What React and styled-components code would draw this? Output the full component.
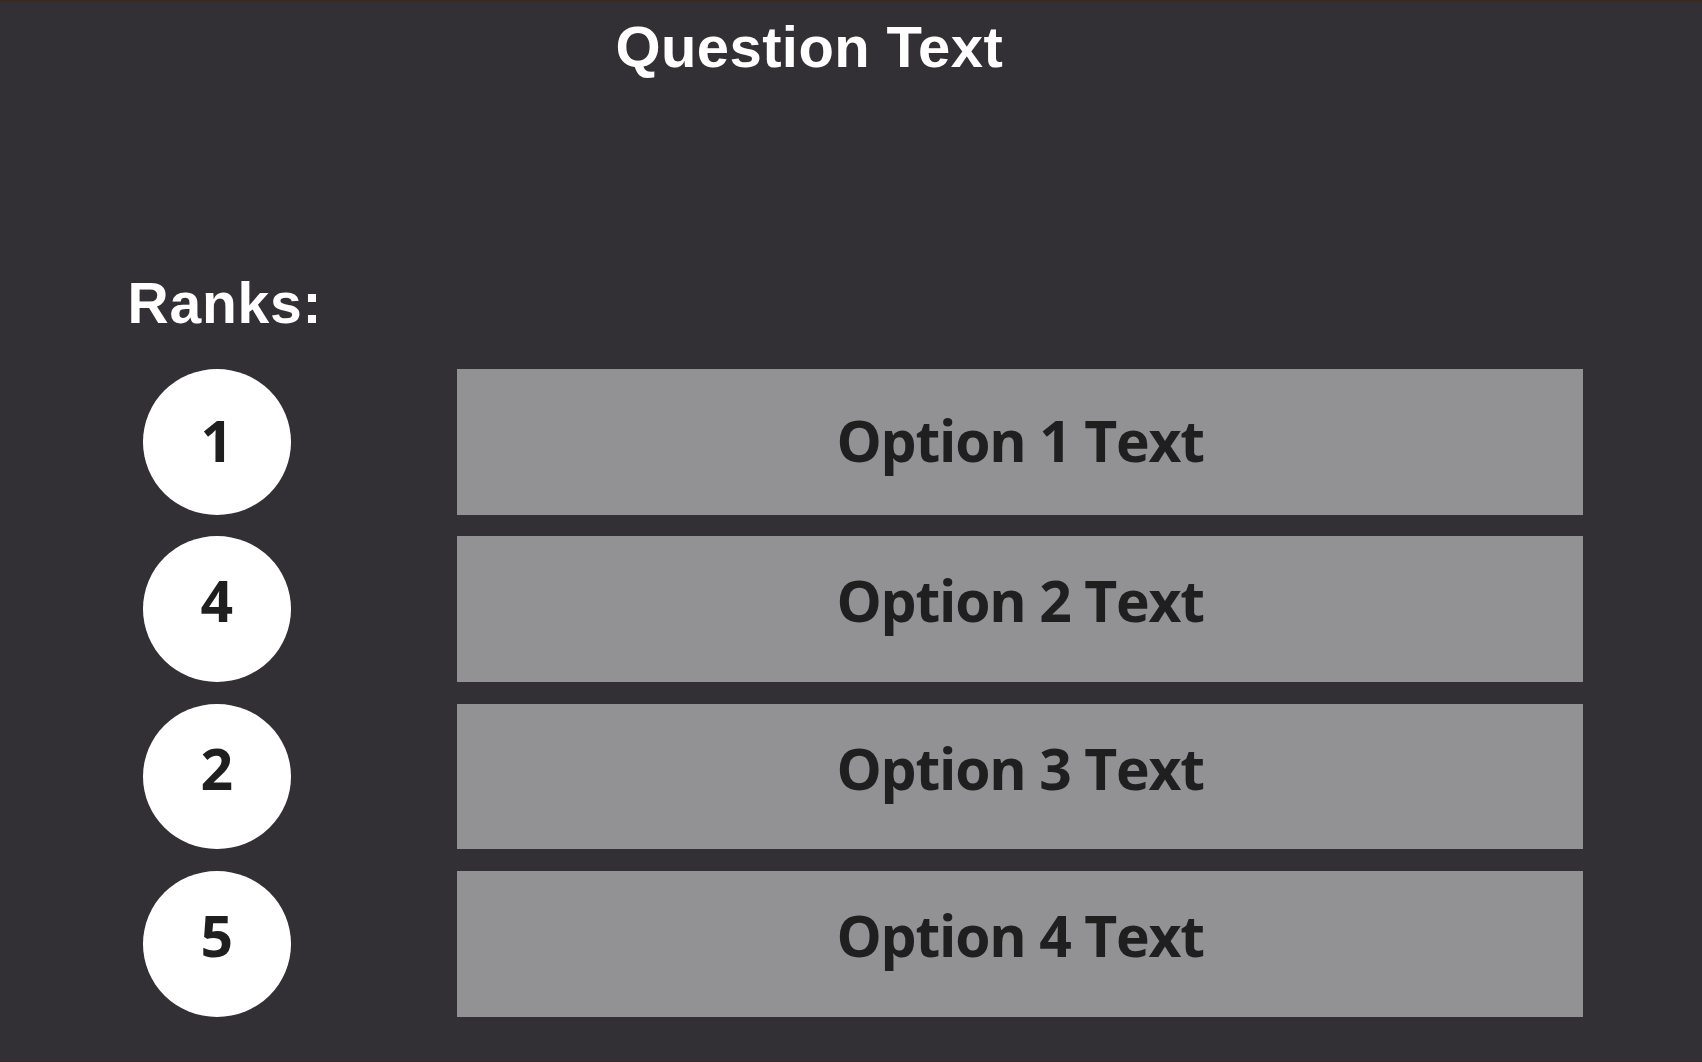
import styled, { createGlobalStyle } from "styled-components";

const GlobalStyle = createGlobalStyle`
  html, body {
    margin: 0;
    padding: 0;
    background: #322f35;
  }
`;

const Page = styled.div`
  box-sizing: border-box;
  width: 1702px;
  height: 1062px;
  background: #322f35;
  border-top: 2px solid #3b2b1f;
  border-bottom: 1px solid #3b2b1f;
  overflow: hidden;
`;

const Title = styled.h1`
  margin: 0;
  padding: 15.6px 0 0 615.5px;
  font-family: "Liberation Sans", Arial, sans-serif;
  font-weight: 700;
  font-size: 58px;
  letter-spacing: 0.4px;
  line-height: 1;
  color: #ffffff;
`;

const RanksLabel = styled.h2`
  margin: 199px 0 0 127.5px;
  font-family: "Liberation Sans", Arial, sans-serif;
  font-weight: 700;
  font-size: 57px;
  letter-spacing: 0.8px;
  line-height: 1;
  color: #ffffff;
`;

const List = styled.div`
  display: flex;
  flex-direction: column;
  gap: 21.6px;
  margin-top: 37.5px;
  padding-left: 142.7px;
`;

const Row = styled.div`
  display: flex;
  align-items: center;
  gap: 166.6px;
  height: 145.7px;
`;

const RankCircle = styled.div`
  box-sizing: border-box;
  width: 148px;
  height: 145.7px;
  padding-bottom: ${(p) => p.$lift * 2}px;
  border-radius: 50%;
  background: #ffffff;
  display: flex;
  align-items: center;
  justify-content: center;
  font-family: "Open Sans", sans-serif;
  font-weight: 700;
  font-size: 57px;
  color: #1f1f1f;
`;

const OptionBox = styled.div`
  box-sizing: border-box;
  width: 1125.7px;
  height: 145.7px;
  padding-bottom: ${(p) => p.$lift * 2}px;
  background: #929294;
  display: flex;
  align-items: center;
  justify-content: center;
  font-family: "Open Sans", sans-serif;
  font-weight: 700;
  font-size: 57px;
  letter-spacing: -1.2px;
  color: #1f1f1f;
`;

const rows = [
  { rank: 1, label: "Option 1 Text", lift: 2 },
  { rank: 4, label: "Option 2 Text", lift: 9 },
  { rank: 2, label: "Option 3 Text", lift: 9 },
  { rank: 5, label: "Option 4 Text", lift: 9 },
];

export default function App() {
  return (
    <Page>
      <GlobalStyle />
      <Title>Question Text</Title>
      <RanksLabel>Ranks:</RanksLabel>
      <List>
        {rows.map((r) => (
          <Row key={r.label}>
            <RankCircle $lift={r.lift}>{r.rank}</RankCircle>
            <OptionBox $lift={r.lift}>{r.label}</OptionBox>
          </Row>
        ))}
      </List>
    </Page>
  );
}
